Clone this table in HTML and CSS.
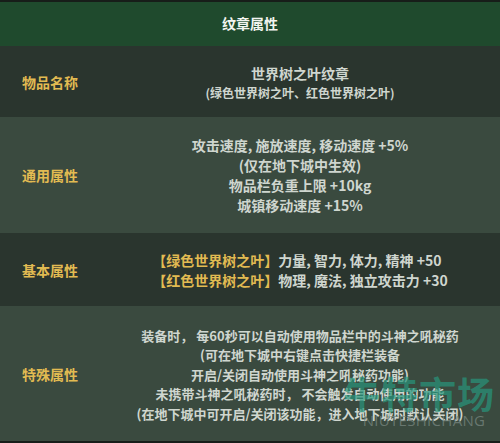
FILE: index.html
```html
<!DOCTYPE html>
<html lang="zh-CN">
<head>
<meta charset="utf-8">
<title>纹章属性</title>
<link rel="stylesheet" href="styles.css">
</head>
<body>
<div class="sheet">
  <div class="head">纹章属性</div>

  <div class="row row-dark r1">
    <div class="label">物品名称</div>
    <div class="value">
      <div class="name">世界树之叶纹章</div>
      <div class="sub">(绿色世界树之叶、红色世界树之叶)</div>
    </div>
  </div>

  <div class="row row-light r2">
    <div class="label">通用属性</div>
    <div class="value">
      <div>攻击速度, 施放速度, 移动速度 +5%</div>
      <div>(仅在地下城中生效)</div>
      <div>物品栏负重上限 +10kg</div>
      <div>城镇移动速度 +15%</div>
    </div>
  </div>

  <div class="row row-dark r3">
    <div class="label">基本属性</div>
    <div class="value">
      <div class="left">
        <div><span class="gold">【绿色世界树之叶】</span>力量, 智力, 体力, 精神 +50</div>
        <div><span class="gold">【红色世界树之叶】</span>物理, 魔法, 独立攻击力 +30</div>
      </div>
    </div>
  </div>

  <div class="row row-light r4">
    <div class="label">特殊属性</div>
    <div class="value small">
      <div>装备时， 每60秒可以自动使用物品栏中的斗神之吼秘药</div>
      <div>(可在地下城中右键点击快捷栏装备</div>
      <div>开启/关闭自动使用斗神之吼秘药功能)</div>
      <div>未携带斗神之吼秘药时， 不会触发自动使用的功能</div>
      <div>(在地下城中可开启/关闭该功能，进入地下城时默认关闭)</div>
    </div>
    <div class="mark">
      <div class="mark-cn">牛特市场</div>
      <div class="mark-en">NIUTESHICHANG</div>
    </div>
  </div>
</div>
</body>
</html>
```

FILE: styles.css
```css
* { box-sizing: border-box; }
html, body { margin: 0; padding: 0; }
body {
  background: #171d19;
  width: 500px;
  height: 443px;
  overflow: hidden;
  font-family: "Noto Sans CJK SC", "Noto Sans", sans-serif;
}
.sheet {
  padding-top: 2px;
  display: flex;
  flex-direction: column;
}
.head {
  height: 44px;
  background: #1f4a2d;
  color: #f2f4f0;
  font-weight: 700;
  font-size: 14px;
  display: flex;
  align-items: center;
  justify-content: center;
  padding-bottom: 2px;
}
.row {
  position: relative;
  display: grid;
  grid-template-columns: 100px 400px;
  align-items: center;
  overflow: hidden;
}
.row-dark { background: #2a352e; }
.row-light { background: #3a4a3f; }
.r1 { height: 71px; }
.r2 { height: 116px; }
.r3 { height: 73px; }
.r4 { height: 135px; }
.label {
  color: #e2bb52;
  font-weight: 700;
  font-size: 14px;
  text-align: center;
}
.value {
  color: #cfd6cf;
  font-weight: 700;
  font-size: 14px;
  line-height: 20px;
  text-align: center;
}
.r1 .value { padding-top: 2px; }
.sub { font-size: 12px; }
.left {
  display: inline-block;
  text-align: left;
}
.gold { color: #e2bb52; }
.small {
  font-size: 13px;
  line-height: 19.5px;
  padding-top: 2px;
}
.mark {
  position: absolute;
  left: 343px;
  top: 66px;
  display: flex;
  flex-direction: column;
  align-items: center;
  pointer-events: none;
}
.mark-cn {
  font-size: 37px;
  font-weight: 700;
  line-height: 42px;
  color: rgba(40, 150, 125, 0.7);
  letter-spacing: 1px;
  white-space: nowrap;
}
.mark-en {
  font-family: "Open Sans", sans-serif;
  font-size: 15px;
  line-height: 16px;
  color: rgba(120, 135, 128, 0.75);
  letter-spacing: 0.3px;
  margin-top: -2px;
  margin-left: 10px;
}
```
